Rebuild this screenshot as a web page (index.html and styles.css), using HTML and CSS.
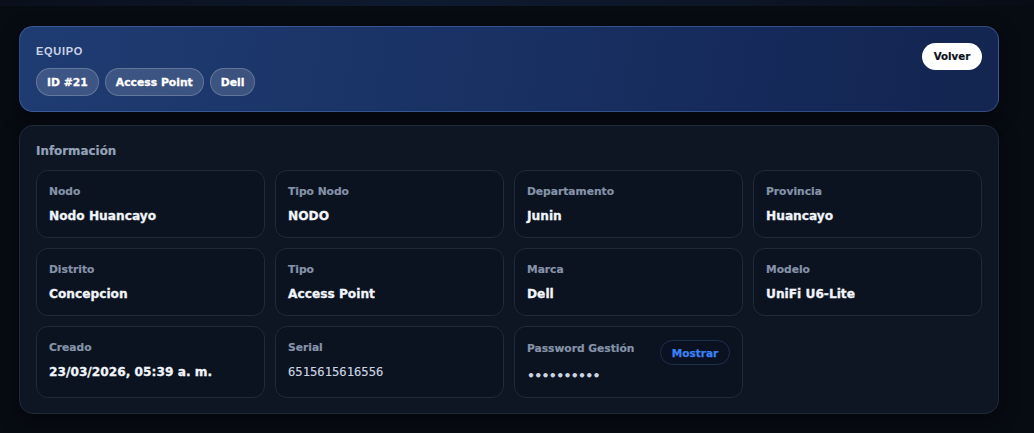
FILE: index.html
```html
<!DOCTYPE html>
<html lang="es">
<head>
<meta charset="utf-8">
<title>Equipo</title>
<link rel="stylesheet" href="styles.css">
</head>
<body>
<div class="topbar"></div>
<main class="page">
  <section class="hero">
    <div class="hero-left">
      <div class="eyebrow">EQUIPO</div>
      <div class="chips">
        <span class="chip">ID #21</span>
        <span class="chip">Access Point</span>
        <span class="chip">Dell</span>
      </div>
    </div>
    <button class="back">Volver</button>
  </section>

  <section class="info">
    <h2 class="info-title">Información</h2>
    <div class="grid">
      <div class="item"><div class="label">Nodo</div><div class="value">Nodo Huancayo</div></div>
      <div class="item"><div class="label">Tipo Nodo</div><div class="value">NODO</div></div>
      <div class="item"><div class="label">Departamento</div><div class="value">Junin</div></div>
      <div class="item"><div class="label">Provincia</div><div class="value">Huancayo</div></div>
      <div class="item"><div class="label">Distrito</div><div class="value">Concepcion</div></div>
      <div class="item"><div class="label">Tipo</div><div class="value">Access Point</div></div>
      <div class="item"><div class="label">Marca</div><div class="value">Dell</div></div>
      <div class="item"><div class="label">Modelo</div><div class="value">UniFi U6-Lite</div></div>
      <div class="item"><div class="label">Creado</div><div class="value">23/03/2026, 05:39 a. m.</div></div>
      <div class="item"><div class="label">Serial</div><div class="value mono">6515615616556</div></div>
      <div class="item">
        <div class="item-head">
          <div class="label">Password Gestión</div>
          <button class="show">Mostrar</button>
        </div>
        <div class="dots">••••••••••</div>
      </div>
    </div>
  </section>
</main>
</body>
</html>
```
FILE: styles.css
```css
* { box-sizing: border-box; }
html, body { margin: 0; padding: 0; }
body {
  background: #070b12;
  font-family: "DejaVu Sans", sans-serif;
  color: #f1f5f9;
  width: 1034px;
  height: 433px;
  overflow: hidden;
}
.topbar {
  height: 6px;
  background: linear-gradient(90deg, #0a0f1b 0%, #0e1a30 40%, #0d1628 70%, #080c15 100%);
}
.page {
  padding: 20px 0 0 19px;
  width: 999px;
}
.hero {
  height: 86px;
  border: 1px solid rgba(110, 150, 220, 0.35);
  border-radius: 14px;
  background: linear-gradient(100deg, #1f3c72 0%, #1a3366 40%, #152a5a 75%, #132550 100%);
  padding: 16px;
  display: flex;
  justify-content: space-between;
  align-items: flex-start;
  box-shadow: 0 6px 20px rgba(0, 0, 0, 0.35);
}
.eyebrow {
  font-family: "Liberation Sans", sans-serif;
  font-weight: 700;
  font-size: 11px;
  line-height: 16px;
  letter-spacing: 0.7px;
  color: #c9d4e6;
}
.chips {
  margin-top: 9px;
  display: flex;
  gap: 6px;
}
.chip {
  height: 28px;
  display: inline-flex;
  align-items: center;
  padding: 0 10px;
  border-radius: 14px;
  background: rgba(255, 255, 255, 0.14);
  border: 1px solid rgba(255, 255, 255, 0.2);
  font-weight: 700;
  font-size: 10.8px;
  color: #ffffff;
  -webkit-text-stroke: 0.3px #ffffff;
}
.back {
  height: 27px;
  width: 60px;
  border: 0;
  border-radius: 14px;
  background: #ffffff;
  color: #0b1220;
  font-family: "DejaVu Sans", sans-serif;
  font-weight: 700;
  font-size: 10.2px;
  padding: 0;
  -webkit-text-stroke: 0.2px #0b1220;
}
.info {
  margin-top: 13px;
  height: 289px;
  border: 1px solid #1f2a3b;
  border-radius: 14px;
  background: #0f1623;
  padding: 16px;
  box-shadow: 0 6px 20px rgba(0, 0, 0, 0.35);
}
.info-title {
  margin: 0;
  font-size: 11.9px;
  line-height: 18px;
  font-weight: 700;
  color: #94a3b8;
  -webkit-text-stroke: 0.2px #94a3b8;
}
.grid {
  margin-top: 10px;
  display: grid;
  grid-template-columns: repeat(4, 1fr);
  column-gap: 10px;
  row-gap: 10px;
}
.item {
  min-height: 68px;
  border: 1px solid #1f2a3a;
  border-radius: 12px;
  background: #0b1220;
  padding: 13px 12px 12px;
}
.label {
  font-size: 10.7px;
  line-height: 16px;
  font-weight: 700;
  color: #8593a8;
  -webkit-text-stroke: 0.2px #8593a8;
}
.value {
  margin-top: 7px;
  font-size: 12.2px;
  line-height: 18px;
  font-weight: 700;
  color: #f1f5f9;
  white-space: nowrap;
  -webkit-text-stroke: 0.3px #f1f5f9;
}
.value.mono {
  font-family: "DejaVu Sans Mono", monospace;
  font-weight: 400;
  font-size: 12.2px;
  color: #cbd5e1;
  -webkit-text-stroke: 0.15px #cbd5e1;
}
.item-head {
  display: flex;
  justify-content: space-between;
  align-items: flex-start;
}
.item-head .label { margin-top: 1px; }
.show {
  height: 25px;
  width: 70px;
  padding: 0;
  border-radius: 13px;
  border: 1px solid #1e2f4d;
  background: #0a1120;
  color: #3b82f6;
  font-family: "DejaVu Sans", sans-serif;
  font-weight: 700;
  font-size: 10.5px;
  -webkit-text-stroke: 0.25px #3b82f6;
}
.dots {
  margin-top: 4px;
  margin-bottom: 2px;
  font-size: 12.5px;
  font-weight: 700;
  line-height: 14px;
  letter-spacing: -0.7px;
  color: #cbd5e1;
}
```
